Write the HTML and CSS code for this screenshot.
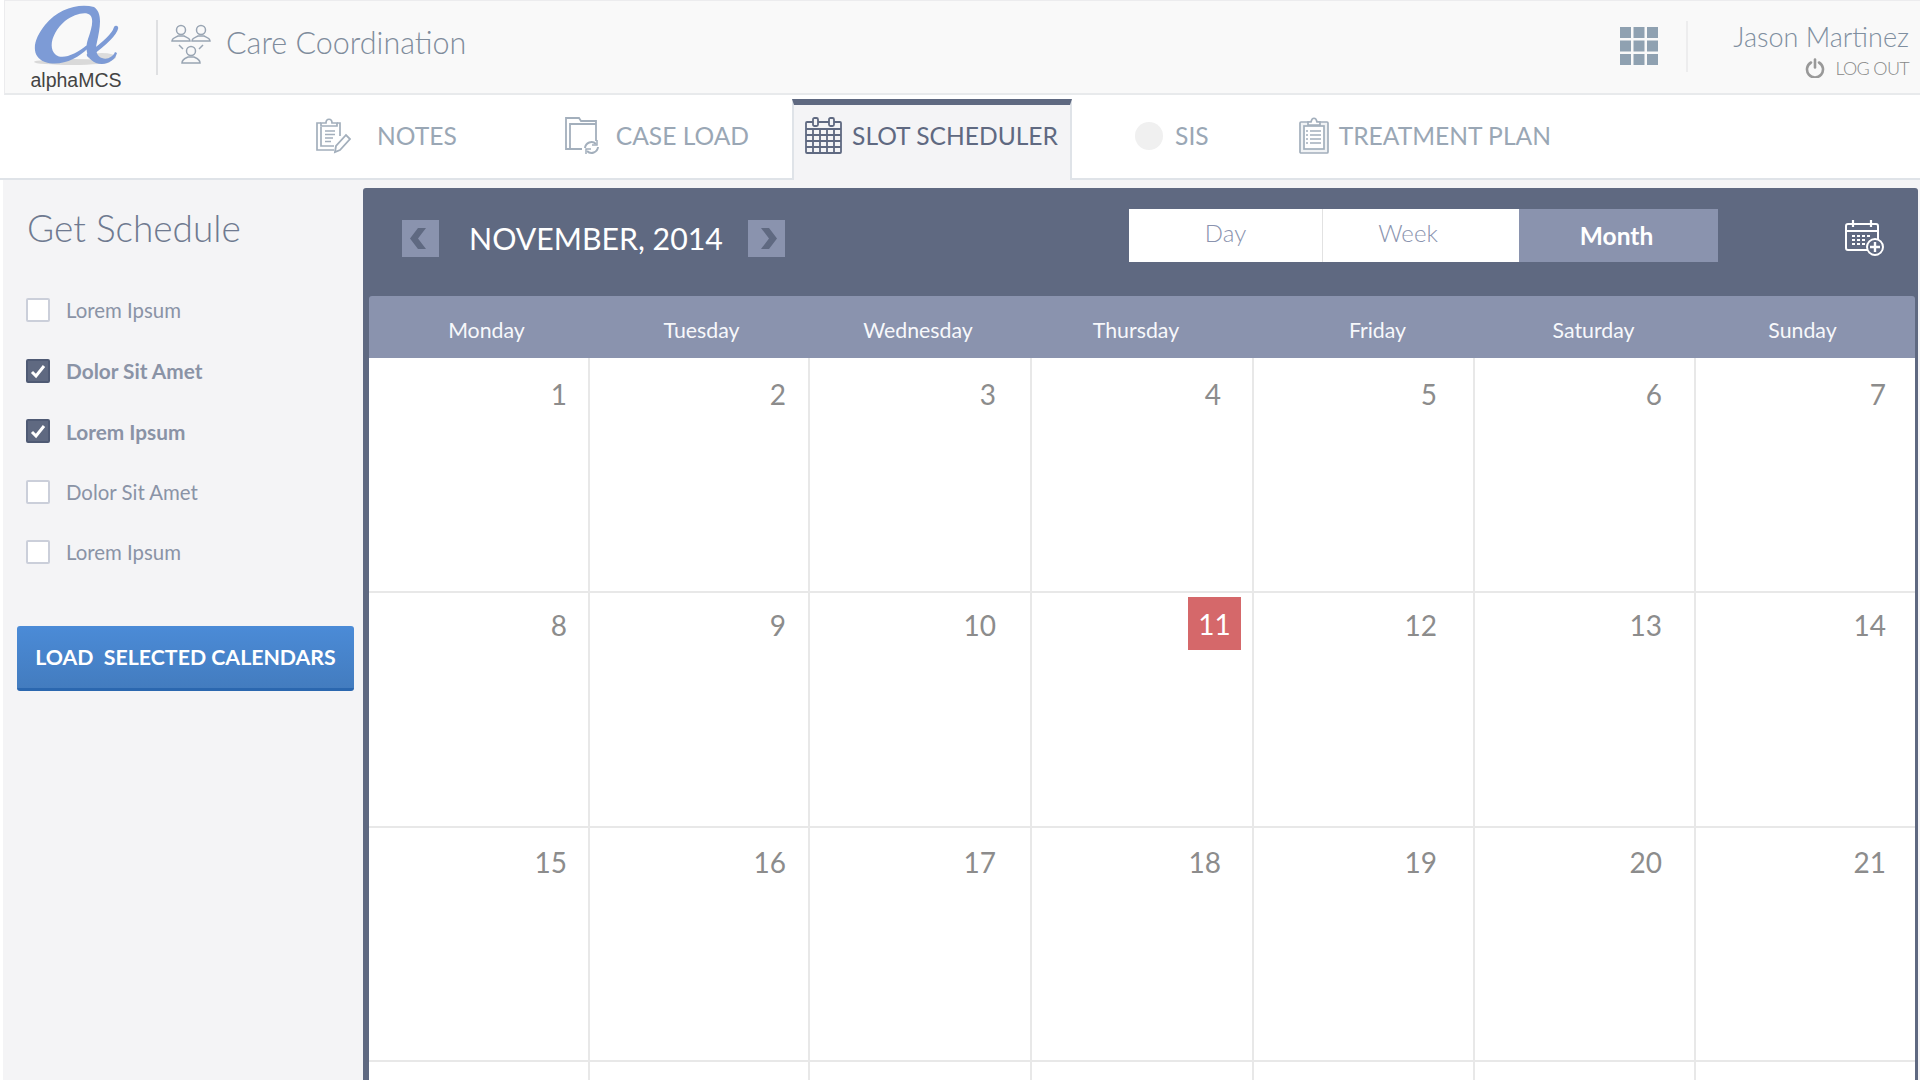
FILE: index.html
```html
<!DOCTYPE html>
<html lang="en">
<head>
<meta charset="utf-8">
<title>Care Coordination</title>
<link rel="stylesheet" href="styles.css">
</head>
<body>
<header class="topbar">
  <div class="logo">
    <svg class="logo-mark" viewBox="0 0 92 62" width="92" height="62">
      <ellipse cx="42" cy="58" rx="38" ry="3" fill="#d9d9d9"/>
      <ellipse cx="72" cy="53" rx="14" ry="4" fill="#dcdcdc"/>
      <path fill="#7d9bd6" d="M64 3C48-1 28 5 15 21 3 36 0 52 15 58c15 5 33-3 43-14l-1-3C46 50 33 56 26 51 17 44 23 27 35 17 44 10 56 7 60 11c4 4 2 13-2 24-3 9-2 20 8 24 10 3 19-2 21-10l-2-1c-2 5-8 8-13 6-6-2-7-9-5-16C70 24 73 9 64 3Z"/>
      <path fill="none" stroke="#7d9bd6" stroke-width="4.5" stroke-linecap="round" d="M86 24C84 32 70 43 59 51"/>
    </svg>
    <span class="logo-text">alphaMCS</span>
  </div>
  <span class="divider"></span>
  <svg class="people" viewBox="0 0 40 40" width="40" height="40" fill="none" stroke="#99a5b3" stroke-width="1.5">
    <circle cx="10" cy="6" r="4.5"/><path d="M1 17c0-3 4-4 6-5h6c2 1 6 2 6 5Z"/>
    <circle cx="30" cy="6" r="4.5"/><path d="M21 17c0-3 4-4 6-5h6c2 1 6 2 6 5Z"/>
    <circle cx="20" cy="27" r="4.5"/><path d="M11 39c0-4 4-5 6-6h6c2 1 6 2 6 6Z"/>
    <path d="M8 21l4 4M32 21l-4 4"/>
  </svg>
  <h1 class="app-title">Care Coordination</h1>
  <svg class="apps" viewBox="0 0 38 38" width="38" height="38" fill="#8fa1b1">
    <rect width="11" height="11"/><rect x="13.500" width="11" height="11"/><rect x="27" width="11" height="11"/>
    <rect y="13.500" width="11" height="11"/><rect x="13.500" y="13.500" width="11" height="11"/><rect x="27" y="13.500" width="11" height="11"/>
    <rect y="27" width="11" height="11"/><rect x="13.500" y="27" width="11" height="11"/><rect x="27" y="27" width="11" height="11"/>
  </svg>
  <span class="divider divider-light"></span>
  <div class="user">
    <span class="user-name">Jason Martinez</span>
    <span class="logout">
      <svg viewBox="0 0 20 20" width="20" height="20" fill="none" stroke="#999" stroke-width="2.600" stroke-linecap="round">
        <path d="M6 4.500a8 8 0 1 0 8 0"/><path d="M10 1.500v8"/>
      </svg>
      LOG OUT
    </span>
  </div>
</header>

<nav class="tabs">
  <a class="tab tab-notes">
    <svg viewBox="0 0 36 36" width="36" height="36" fill="none" stroke="#a3afbc" stroke-width="1.700">
      <path d="M6 5H2v27h17"/><path d="M6 8V5h5c0-5 6-5 6 0h5v3Z"/><path d="M22 5h3v13"/><path d="M6 9v19h13"/>
      <path d="M10 13h10M10 16.500h10M10 20h8M10 23.500h6" stroke-width="1.300"/>
      <path d="M20 34l1-6 10-11 4 4-10 11Z" stroke-width="1.800"/>
    </svg>
    <span>NOTES</span>
  </a>
  <a class="tab tab-case">
    <svg viewBox="0 0 36 38" width="36" height="38" fill="none" stroke="#a3afbc" stroke-width="1.800">
      <path d="M17 32H1V1h13l2 3h15v20"/><path d="M5 32V7h26"/>
      <path d="M20 31a6.500 6.500 0 0 1 11-4M33 30a6.500 6.500 0 0 1-11 4" stroke-width="2"/>
      <path d="M32 23v5h-5M21 37v-5h5" stroke-width="1.500"/>
    </svg>
    <span>CASE LOAD</span>
  </a>
  <a class="tab tab-active">
    <svg viewBox="0 0 37 37" width="37" height="37" fill="none" stroke="#5f6981" stroke-width="1.800">
      <rect x="1" y="5" width="35" height="31" rx="1"/>
      <rect x="8" y="1" width="5" height="8" rx="1.500" fill="#f4f4f6"/><rect x="24" y="1" width="5" height="8" rx="1.500" fill="#f4f4f6"/>
      <path d="M13 5h11M1 12h35M1 18h35M1 24h35M1 30h35M8 12v24M15 12v24M22 12v24M29 12v24"/>
    </svg>
    <span>SLOT SCHEDULER</span>
  </a>
  <a class="tab tab-sis">
    <span class="sis-dot"></span>
    <span>SIS</span>
  </a>
  <a class="tab tab-plan">
    <svg viewBox="0 0 30 37" width="30" height="37" fill="none" stroke="#a3afbc" stroke-width="1.700">
      <rect x="1" y="5" width="28" height="31" rx="1" fill="#f1f3f5"/>
      <rect x="5" y="9" width="20" height="23" fill="#fff"/>
      <path d="M9 8V5h3c1-5 5-5 6 0h3v3Z" fill="#fff"/>
      <path d="M11 14h11M11 18h11M11 22h11M11 26h11" stroke-width="1.500"/>
      <path d="M7 14h2M7 18h2M7 22h2M7 26h2" stroke-width="1.500"/>
    </svg>
    <span>TREATMENT PLAN</span>
  </a>
</nav>

<main class="workspace">
  <aside class="sidebar">
    <h2 class="side-title">Get Schedule</h2>
    <ul class="checks">
      <li class="check"><span class="box"></span>Lorem Ipsum</li>
      <li class="check is-on"><span class="box"><svg viewBox="0 0 24 24" width="24" height="24" fill="none" stroke="#fff" stroke-width="3"><path d="M6 13l4 4 8-10"/></svg></span>Dolor Sit Amet</li>
      <li class="check is-on"><span class="box"><svg viewBox="0 0 24 24" width="24" height="24" fill="none" stroke="#fff" stroke-width="3"><path d="M6 13l4 4 8-10"/></svg></span>Lorem Ipsum</li>
      <li class="check"><span class="box"></span>Dolor Sit Amet</li>
      <li class="check"><span class="box"></span>Lorem Ipsum</li>
    </ul>
    <button class="load-btn">LOAD&nbsp; SELECTED CALENDARS</button>
  </aside>

  <section class="calendar">
    <div class="cal-bar">
      <button class="arrow"><svg viewBox="0 0 37 37" width="37" height="37" fill="#5f6981"><path d="M24 8h-8L8 18.500 16 29h8l-8-10.500Z"/></svg></button>
      <span class="month-label">NOVEMBER, 2014</span>
      <button class="arrow arrow-next"><svg viewBox="0 0 37 37" width="37" height="37" fill="#5f6981"><path d="M13 8h8l8 10.500L21 29h-8l8-10.500Z"/></svg></button>
      <div class="views">
        <span class="view view-day">Day</span>
        <span class="view view-week">Week</span>
        <span class="view view-month">Month</span>
      </div>
      <svg class="add-event" viewBox="0 0 39 36" width="39" height="36" fill="none" stroke="#fff" stroke-width="2">
        <rect x="1" y="4" width="32" height="26" rx="2"/>
        <path d="M8 0v7M26 0v7M1 11h32" stroke-width="2.200"/>
        <path d="M7 16h3M12 16h3M17 16h3M22 16h3M7 20h3M12 20h3M17 20h3M7 24h3M12 24h3M17 24h3" stroke-width="2.200"/>
        <circle cx="30" cy="27" r="8" fill="#5f6981"/>
        <path d="M30 22v10M25 27h10" stroke-width="2.400"/>
      </svg>
    </div>
    <div class="weekdays">
      <span>Monday</span><span>Tuesday</span><span>Wednesday</span><span>Thursday</span><span>Friday</span><span>Saturday</span><span>Sunday</span>
    </div>
    <div class="week week-1">
      <div class="day">1</div><div class="day">2</div><div class="day">3</div><div class="day">4</div><div class="day">5</div><div class="day">6</div><div class="day">7</div>
    </div>
    <div class="week week-2">
      <div class="day">8</div><div class="day">9</div><div class="day">10</div><div class="day day-today"><span class="today">11</span></div><div class="day">12</div><div class="day">13</div><div class="day">14</div>
    </div>
    <div class="week week-3">
      <div class="day">15</div><div class="day">16</div><div class="day">17</div><div class="day">18</div><div class="day">19</div><div class="day">20</div><div class="day">21</div>
    </div>
    <div class="week week-4">
      <div class="day"></div><div class="day"></div><div class="day"></div><div class="day"></div><div class="day"></div><div class="day"></div><div class="day"></div>
    </div>
  </section>
</main>
</body>
</html>
```
FILE: styles.css
```css
* { box-sizing: border-box; }
html, body { margin: 0; padding: 0; height: 1080px; overflow: hidden; background: #fff; font-family: Lato, "Open Sans", sans-serif; }
h1, h2, ul { margin: 0; padding: 0; font-weight: normal; }
li { list-style: none; }
button { font-family: inherit; border: 0; padding: 0; }

.topbar { height: 95px; margin-left: 4px; display: flex; align-items: center; background: #f9f9f9; border-top: 1px solid #ececee; border-left: 1px solid #ececee; border-bottom: 2px solid #e8eaec; }
.logo { width: 92px; margin-left: 25px; display: flex; flex-direction: column; align-items: center; align-self: flex-start; padding-top: 3px; }
.logo-mark { display: block; }
.logo-text { font: 19.500px/21px "Liberation Sans", Arial, sans-serif; color: #444; margin-top: 4px; }
.divider { width: 2px; height: 55px; background: #dfe0e2; margin-left: 34px; }
.people { margin-left: 13px; margin-top: -6px; }
.app-title { font-size: 30.500px; font-weight: 300; color: #7f8c9c; margin-left: 15px; margin-top: -10px; }
.apps { margin-left: auto; margin-top: -2px; }
.divider-light { background: #ededee; margin-left: 28px; height: 51px; margin-top: -2px; }
.user { width: 232px; display: flex; flex-direction: column; align-items: flex-end; padding-right: 11px; margin-top: 5px; }
.user-name { font-size: 27px; font-weight: 300; line-height: 32px; color: #7f8fa0; }
.logout { display: flex; align-items: center; gap: 10px; font-size: 18px; line-height: 22px; font-weight: 300; color: #888; letter-spacing: -0.7px; margin-top: 4px; }

.tabs { height: 85px; display: flex; align-items: center; padding: 0 0 2px 315px; background: #fff; border-bottom: 2px solid #dfe3e8; font-size: 24.600px; color: #9aa7b5; }
.tab { display: flex; align-items: center; }
.tab-notes { gap: 26px; }
.tab-case { gap: 15px; margin-left: 108px; }
.tab-active { gap: 10px; margin-left: 43px; width: 280px; height: 81px; align-self: flex-end; margin-bottom: -4px; padding: 0 0 14px 11px; background: #f4f4f6; border-top: 6px solid #5f6981; border-left: 2px solid #dfe3e8; border-right: 2px solid #dfe3e8; color: #5f6981; }
.tab-sis { gap: 12px; margin-left: 63px; }
.sis-dot { width: 28px; height: 28px; border-radius: 50%; background: #f0f0f0; }
.tab-plan { gap: 10px; margin-left: 90px; }

.workspace { display: flex; height: 900px; margin-left: 3px; background: #f4f4f6; padding-right: 2px; }
.sidebar { width: 360px; flex: none; padding-left: 14px; }
.side-title { font-size: 37px; font-weight: 300; line-height: 44px; color: #6f7a90; margin: 26px 0 0 10px; }
.checks { margin: 30px 0 0 9px; }
.check { display: flex; align-items: center; gap: 16px; height: 60.500px; font-size: 20.400px; font-weight: 400; color: #8a93a6; }
.check.is-on { font-weight: 700; font-size: 20.800px; }
.box { width: 24px; height: 24px; flex: none; background: #fff; border: 2px solid #cbcfda; border-radius: 2px; display: block; position: relative; }
.is-on .box { background: #5f6981; border-color: #4f5a74; }
.box svg { display: block; margin: -2px; }
.load-btn { display: block; width: 337px; height: 65px; margin-top: 43px; border-radius: 3px; background: linear-gradient(#4b8bd7, #437cbf); border-bottom: 3px solid #2b67af; color: #fff; font-size: 21.300px; font-weight: 700; }

.calendar { flex: 1; height: 892px; overflow: hidden; margin-top: 8px; background: #5f6981; padding: 0 3px 0 6px; border-radius: 3px 3px 0 0; }
.cal-bar { height: 108px; display: flex; align-items: center; padding: 0 0 7px 33px; }
.arrow { width: 37px; height: 37px; background: #8a93ae; display: block; }
.arrow svg { display: block; }
.month-label { font-size: 30.300px; color: #fff; margin: -2px 0 0 30px; width: 253px; white-space: nowrap; }
.arrow-next { margin-left: 26px; }
.views { display: flex; width: 589px; height: 53px; margin: -7px 0 0 344px; background: #fff; font-size: 24px; font-weight: 300; color: #8a93ae; }
.view { display: flex; align-items: center; justify-content: center; padding-bottom: 6px; }
.view-day { width: 194px; border-right: 1px solid #e2e2e2; }
.view-week { width: 196px; padding-right: 26px; }
.view-month { flex: 1; background: #8a93ae; color: #fff; font-size: 24.500px; font-weight: 700; padding: 0 4px 0 0; }
.add-event { margin-left: 127px; margin-top: -1px; }

.weekdays { display: grid; grid-template-columns: 221px 220px 222px 222px 221px 221px 219px; height: 62px; background: #8a93ae; border-radius: 3px 3px 0 0; font-size: 21.300px; color: #f7f8fb; }
.weekdays span { display: flex; align-items: center; justify-content: center; padding-top: 5px; }
.weekdays span:nth-child(1) { padding-left: 14px; }
.weekdays span:nth-child(2) { padding-left: 3px; }
.weekdays span:nth-child(3) { padding-right: 6px; }
.weekdays span:nth-child(4) { padding-right: 14px; }
.weekdays span:nth-child(5) { padding-left: 26px; }
.weekdays span:nth-child(6) { padding-left: 16px; }
.weekdays span:nth-child(7) { padding-right: 6px; }

.week { display: grid; grid-template-columns: 221px 220px 222px 222px 221px 221px 219px; height: 235px; background: #fff; }
.week-3 { height: 234px; }
.week-4 { height: 18px; }
.day { display: flex; justify-content: flex-end; border-right: 2px solid #e8e8e8; border-bottom: 2px solid #e8e8e8; font-size: 28px; line-height: 34px; color: #8c8c8c; }
.week-4 .day { border-bottom: 0; }
.day:last-child { border-right: 0; }
.day:nth-child(1) { padding-right: 21px; }
.day:nth-child(2) { padding-right: 22px; }
.day:nth-child(3) { padding-right: 34px; }
.day:nth-child(4) { padding-right: 31px; }
.day:nth-child(5) { padding-right: 36px; }
.day:nth-child(6) { padding-right: 32px; }
.day:nth-child(7) { padding-right: 29px; }
.week-1 .day { padding-top: 19px; }
.week-2 .day { padding-top: 15px; }
.week-3 .day { padding-top: 17px; }
.week-2 .day-today { padding: 4px 11px 0 0; }
.today { width: 53px; height: 53px; display: flex; align-items: center; justify-content: center; background: #d5686a; color: #fff; }
```
